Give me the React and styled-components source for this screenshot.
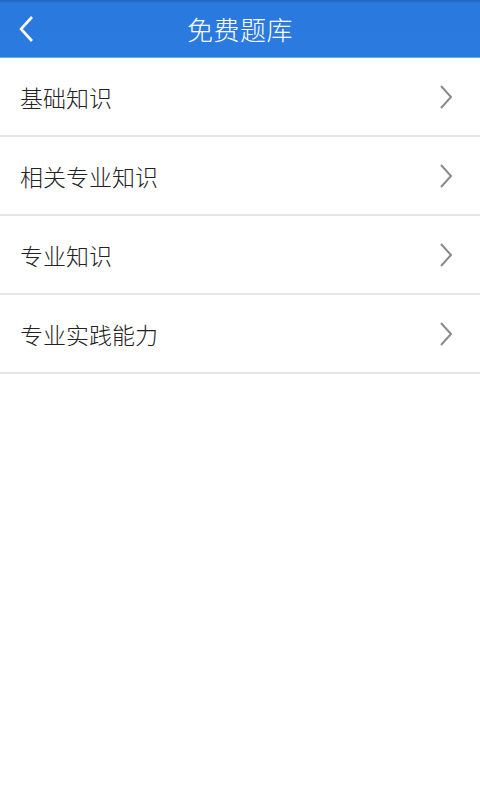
import React from "react";
import styled, { createGlobalStyle } from "styled-components";

const items = ["基础知识", "相关专业知识", "专业知识", "专业实践能力"];

const GlobalStyle = createGlobalStyle`
    html, body {
        margin: 0;
        padding: 0;
        background: #ffffff;
        font-family: "Roboto", "Noto Sans CJK SC", sans-serif;
    }
`;

const Page = styled.div`
    width: 480px;
    height: 800px;
    background: #ffffff;
`;

const Header = styled.header`
    position: relative;
    height: 58px;
    display: flex;
    align-items: center;
    justify-content: center;
    background: linear-gradient(#1f63b8 0px, #2a79de 3px, #2a7ae0 100%);
    border-bottom: 1px solid #6aa6ec;
    box-sizing: border-box;
`;

const BackButton = styled.button`
    position: absolute;
    left: 12px;
    top: 12px;
    width: 30px;
    height: 34px;
    padding: 0;
    border: none;
    background: transparent;
    display: flex;
    align-items: center;
    justify-content: center;
`;

const Title = styled.h1`
    margin: 0;
    color: #ffffff;
    font-size: 26px;
    font-weight: 300;
    font-family: "Noto Sans CJK SC", sans-serif;
    letter-spacing: 0.5px;
`;

const List = styled.ul`
    list-style: none;
    margin: 0;
    padding: 0;
`;

const Row = styled.li`
    height: 77px;
    display: flex;
    align-items: center;
    justify-content: space-between;
    padding: 0 26px 0 20px;
    border-bottom: 2px solid #e6e6e6;
`;

const Label = styled.span`
    font-size: 23px;
    font-weight: 300;
    color: #222222;
    font-family: "Noto Sans CJK SC", sans-serif;
`;

const Chevron = () => (
    <svg width="16" height="26" viewBox="0 0 16 26">
        <polyline points="3,2 13,13 3,24" fill="none" stroke="#8a8a8a" strokeWidth="2" />
    </svg>
);

const App = () => {
    return (
        <Page>
            <GlobalStyle />
            <Header>
                <BackButton>
                    <svg width="18" height="28" viewBox="0 0 18 28">
                        <polyline points="14,2 3,14 14,26" fill="none" stroke="#ffffff" strokeWidth="2.6" />
                    </svg>
                </BackButton>
                <Title>免费题库</Title>
            </Header>
            <List>
                {items.map((item) => (
                    <Row key={item}>
                        <Label>{item}</Label>
                        <Chevron />
                    </Row>
                ))}
            </List>
        </Page>
    );
};

export default App;
